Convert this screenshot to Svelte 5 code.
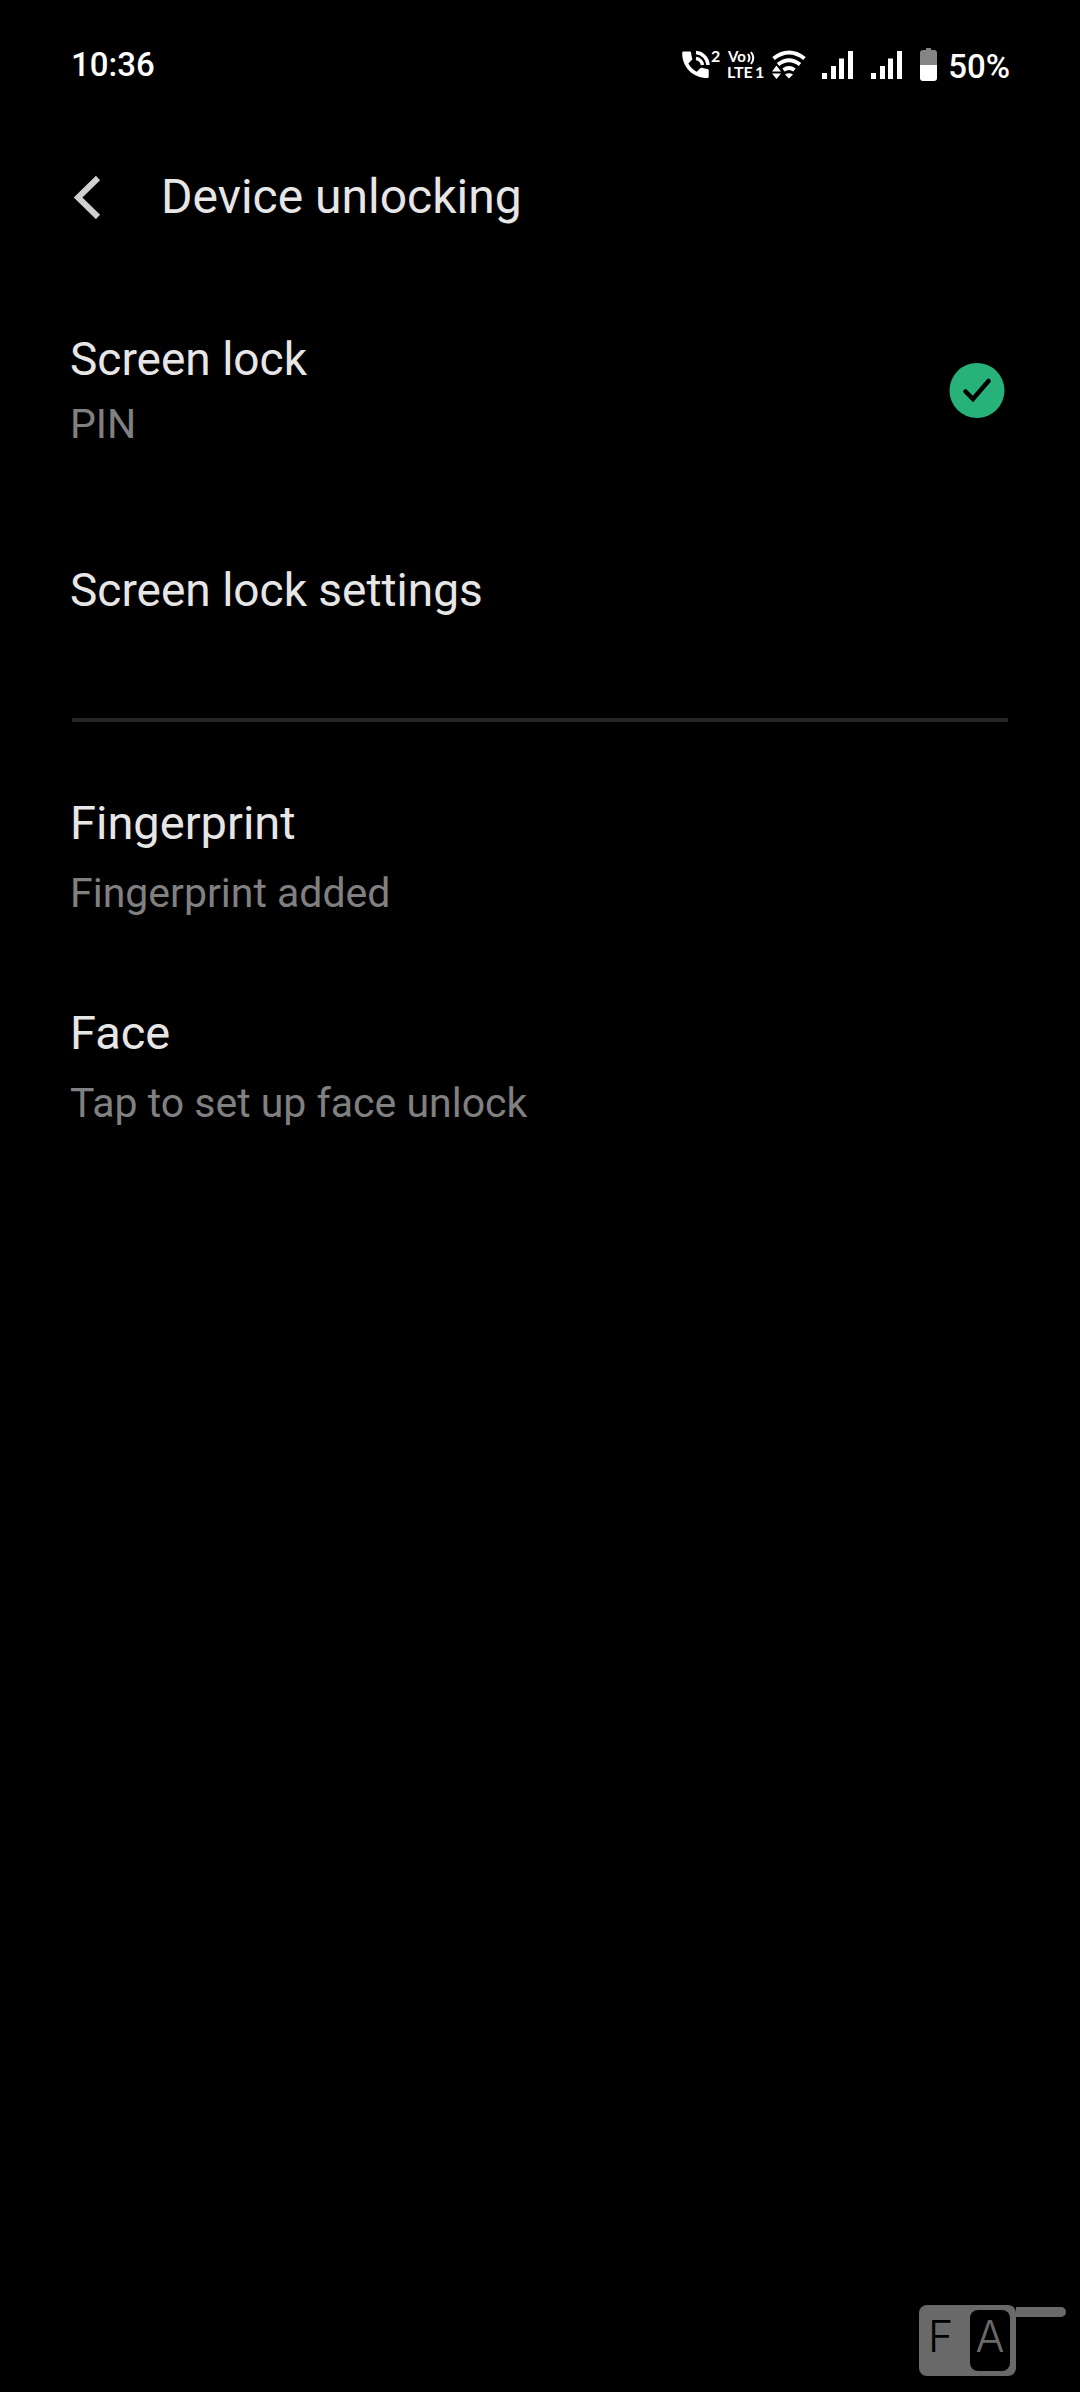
<script lang="ts">
  type Item = { title: string; note?: string; checked?: boolean };

  const lockItems: Item[] = [
    { title: 'Screen lock', note: 'PIN', checked: true },
    { title: 'Screen lock settings' },
  ];
  const biometricItems: Item[] = [
    { title: 'Fingerprint', note: 'Fingerprint added' },
    { title: 'Face', note: 'Tap to set up face unlock' },
  ];
</script>

{#snippet signal()}
  <svg class="signal" width="31" height="28" viewBox="0 0 31 28" aria-hidden="true">
    <path d="M0 22h5v6H0zM9 15h5v13H9zM17 7.500h5v20.500h-5zM26 0h5v28h-5z" />
  </svg>
{/snippet}

<div class="screen">
  <div class="status">
    <time>10:36</time>
    <div class="status-icons">
      <svg class="call" width="40" height="30" viewBox="0 0 40 30" aria-hidden="true">
        <path d="M1.500 1.500h6.300q1.200 0 1.300 1.200.2 3 1.100 5.500.3 1-.4 1.700L6.400 13.400q3 5.600 8.300 8.300l3.500-3.500q.8-.7 1.800-.4 2.600.9 5.500 1.100 1.200.1 1.200 1.300v6.600q0 1.200-1.300 1.200C10.800 28 0 17 .2 2.700q0-1.200 1.300-1.200z" />
        <path class="line" d="M14 8.500a7.500 7.500 0 0 1 6.500 6.500M14 2.500a13 13 0 0 1 12 12.500" />
        <text x="29" y="12" font-size="16">2</text>
      </svg>
      <svg class="volte" width="36" height="30" viewBox="0 0 36 30" aria-hidden="true">
        <text x="0" y="12" font-size="15">Vo</text>
        <path class="thin" d="M20 4q3 4 0 8M23 2q4.500 6 0 12" />
        <text x="-1" y="28" font-size="16">LTE</text>
        <text x="27" y="28" font-size="16">1</text>
      </svg>
      <svg class="wifi" width="34" height="30" viewBox="0 0 34 30" aria-hidden="true">
        <path class="arc" d="M1.500 8.500q15.500-12 31 0M6 14.500q11-8.500 22 0M11.500 20q5.500-4 11 0" />
        <path d="M13 24.500q4-2.500 8 0l-4 4zM0 21.500l4.500-6 4.500 6zM0 23.500h9l-4.500 5.500z" />
      </svg>
      {@render signal()}
      {@render signal()}
      <svg class="battery" width="17" height="33" viewBox="0 0 17 33" aria-hidden="true">
        <path class="empty" d="M6 0h5v2h3q3 0 3 3v12H0V5q0-3 3-3h3z" />
        <path d="M0 17h17v13q0 3-3 3H3q-3 0-3-3z" />
      </svg>
      <span class="percent">50%</span>
    </div>
  </div>

  <header>
    <button class="back" aria-label="Back">
      <svg width="28" height="44" viewBox="0 0 28 44" aria-hidden="true">
        <path d="M24 3L4 22.500 24 42" />
      </svg>
    </button>
    <h1>Device unlocking</h1>
  </header>

  <main>
    {#each lockItems as item}
      <button class="row lock" class:single={!item.note}>
        <span class="labels">
          <span class="title">{item.title}</span>
          {#if item.note}<span class="note">{item.note}</span>{/if}
        </span>
        {#if item.checked}
          <svg class="check" width="56" height="56" viewBox="0 0 56 56" aria-hidden="true">
            <circle cx="28" cy="28.500" r="27.500" />
            <path d="M16.500 29.500l7.500 7.500 15.500-18" />
          </svg>
        {/if}
      </button>
    {/each}
    <hr />
    {#each biometricItems as item}
      <button class="row">
        <span class="labels">
          <span class="title">{item.title}</span>
          <span class="note">{item.note}</span>
        </span>
      </button>
    {/each}
  </main>

  <footer>
    <div class="mark"><span class="f">F</span><span class="a">A</span></div>
    <div class="bar"></div>
  </footer>
</div>

<style>
  :global(body) { background:#000 }
  .screen { display:flex;flex-direction:column;min-height:100vh;box-sizing:border-box;background:#000;color:#e6e6e6;font-family:Roboto, sans-serif }

  .status { display:flex;justify-content:space-between;align-items:center;padding:44px 70px 0 71px;height:41px;font-size:33px;line-height:40px;font-weight:500;color:#fff }
  .status-icons { display:flex;align-items:center }
  .status-icons svg { fill:#fff;overflow:visible }
  .status-icons text { font-family:Lato, sans-serif;font-weight:700 }
  .status-icons path.line { fill:none;stroke:#fff;stroke-width:3.5 }
  .status-icons path.thin { fill:none;stroke:#fff;stroke-width:2 }
  .status-icons path.arc { fill:none;stroke:#fff;stroke-width:4 }
  .call { margin-right:6px }
  .volte { margin-right:8px }
  .wifi { margin-right:16px }
  .signal { margin-right:18px }
  .battery { margin-right:11px }
  .status-icons path.empty { fill:#858585 }
  .percent { padding-top:4px }

  header { display:flex;align-items:center;gap:59px;padding:84px 74px 62px }
  h1 { margin:0;font-size:48px;line-height:56px;font-weight:400 }
  button { border:none;background:none;padding:0;color:inherit;font-family:inherit;text-align:left;cursor:pointer }
  .back { display:flex }
  .back path { fill:none;stroke:#d0d0d0;stroke-width:6 }

  main { display:flex;flex-direction:column }
  .row { display:flex;align-items:center;justify-content:space-between;padding:44px 75px 44px 70px }
  .labels { display:flex;flex-direction:column;gap:18px }
  .title { font-size:47px;line-height:56px }
  .lock .labels { gap:13px }
  .lock .title { font-size:46px }
  .single { padding-top:70px;padding-bottom:70px }
  .note { font-size:41px;line-height:48px;color:#808080 }
  .check circle { fill:#27b27a }
  .check path { fill:none;stroke:#000;stroke-width:4.500;stroke-linecap:round }
  hr { width:auto;height:4px;margin:30px 72px 29px;border:none;background:#262626 }

  footer { display:flex;justify-content:flex-end;margin-top:auto;padding:0 14px 16px }
  .mark { display:flex;gap:18px;padding:5px 6px 5px 9px;border-radius:8px;background:#696969;font:300 43px/53px Inter, sans-serif }
  .f { width:24px;color:#000;text-align:center }
  .a { width:40px;padding-bottom:8px;border-radius:8px;background:#000;color:#696969;text-align:center }
  .bar { width:50px;height:10px;margin-top:2px;border-radius:0 5px 5px 0;background:#696969 }
</style>
